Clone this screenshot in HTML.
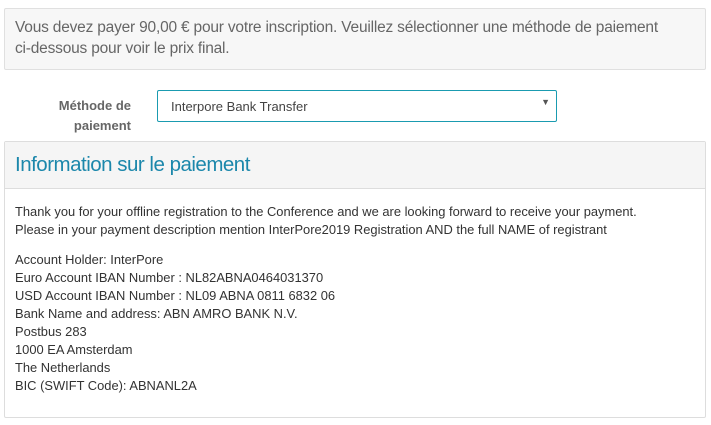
<!DOCTYPE html>
<html><head><style>
body{margin:0;width:711px;height:425px;background:#fff;font-family:"Liberation Sans",sans-serif;overflow:hidden;position:relative}
.top{position:absolute;left:4px;top:8px;width:702px;height:62px;background:#f7f7f7;border:1px solid #e0e0e0;border-radius:2px;box-sizing:border-box;padding:8px 10px;font-size:15.5px;line-height:21px;color:#666;letter-spacing:-0.2px;white-space:nowrap}
.lab{position:absolute;left:40px;width:91px;top:96px;text-align:right;font-weight:bold;font-size:13px;line-height:20px;color:#666}
.sel{position:absolute;left:157px;top:90px;width:400px;height:32px;box-sizing:border-box;border:1px solid #1a9bb0;border-radius:2px;font-size:13px;color:#444;padding:8px 13px}
.sel span{position:absolute;right:6px;top:6px;font-size:9px;color:#555}
.panel{position:absolute;left:4px;top:141px;width:702px;height:277px;box-sizing:border-box;border:1px solid #ddd;border-radius:2px}
.hd{height:46px;background:#f5f5f5;border-bottom:1px solid #ddd;padding:0 10px;font-size:20.5px;line-height:46px;color:#1b87ab;letter-spacing:-0.5px}
.bd{padding:14px 10px;font-size:12.9px;line-height:18px;color:#333;white-space:nowrap}
</style></head><body>
<div class="top">Vous devez payer 90,00 € pour votre inscription. Veuillez sélectionner une méthode de paiement<br>ci-dessous pour voir le prix final.</div>
<div class="lab">Méthode de paiement</div>
<div class="sel">Interpore Bank Transfer<span>▼</span></div>
<div class="panel"><div class="hd">Information sur le paiement</div>
<div class="bd">Thank you for your offline registration to the Conference and we are looking forward to receive your payment.<br>Please in your payment description mention InterPore2019 Registration AND the full NAME of registrant<br><div style="height:12px"></div>Account Holder: InterPore<br>Euro Account IBAN Number : NL82ABNA0464031370<br>USD Account IBAN Number : NL09 ABNA 0811 6832 06<br>Bank Name and address: ABN AMRO BANK N.V.<br>Postbus 283<br>1000 EA Amsterdam<br>The Netherlands<br>BIC (SWIFT Code): ABNANL2A</div></div>
</body></html>
